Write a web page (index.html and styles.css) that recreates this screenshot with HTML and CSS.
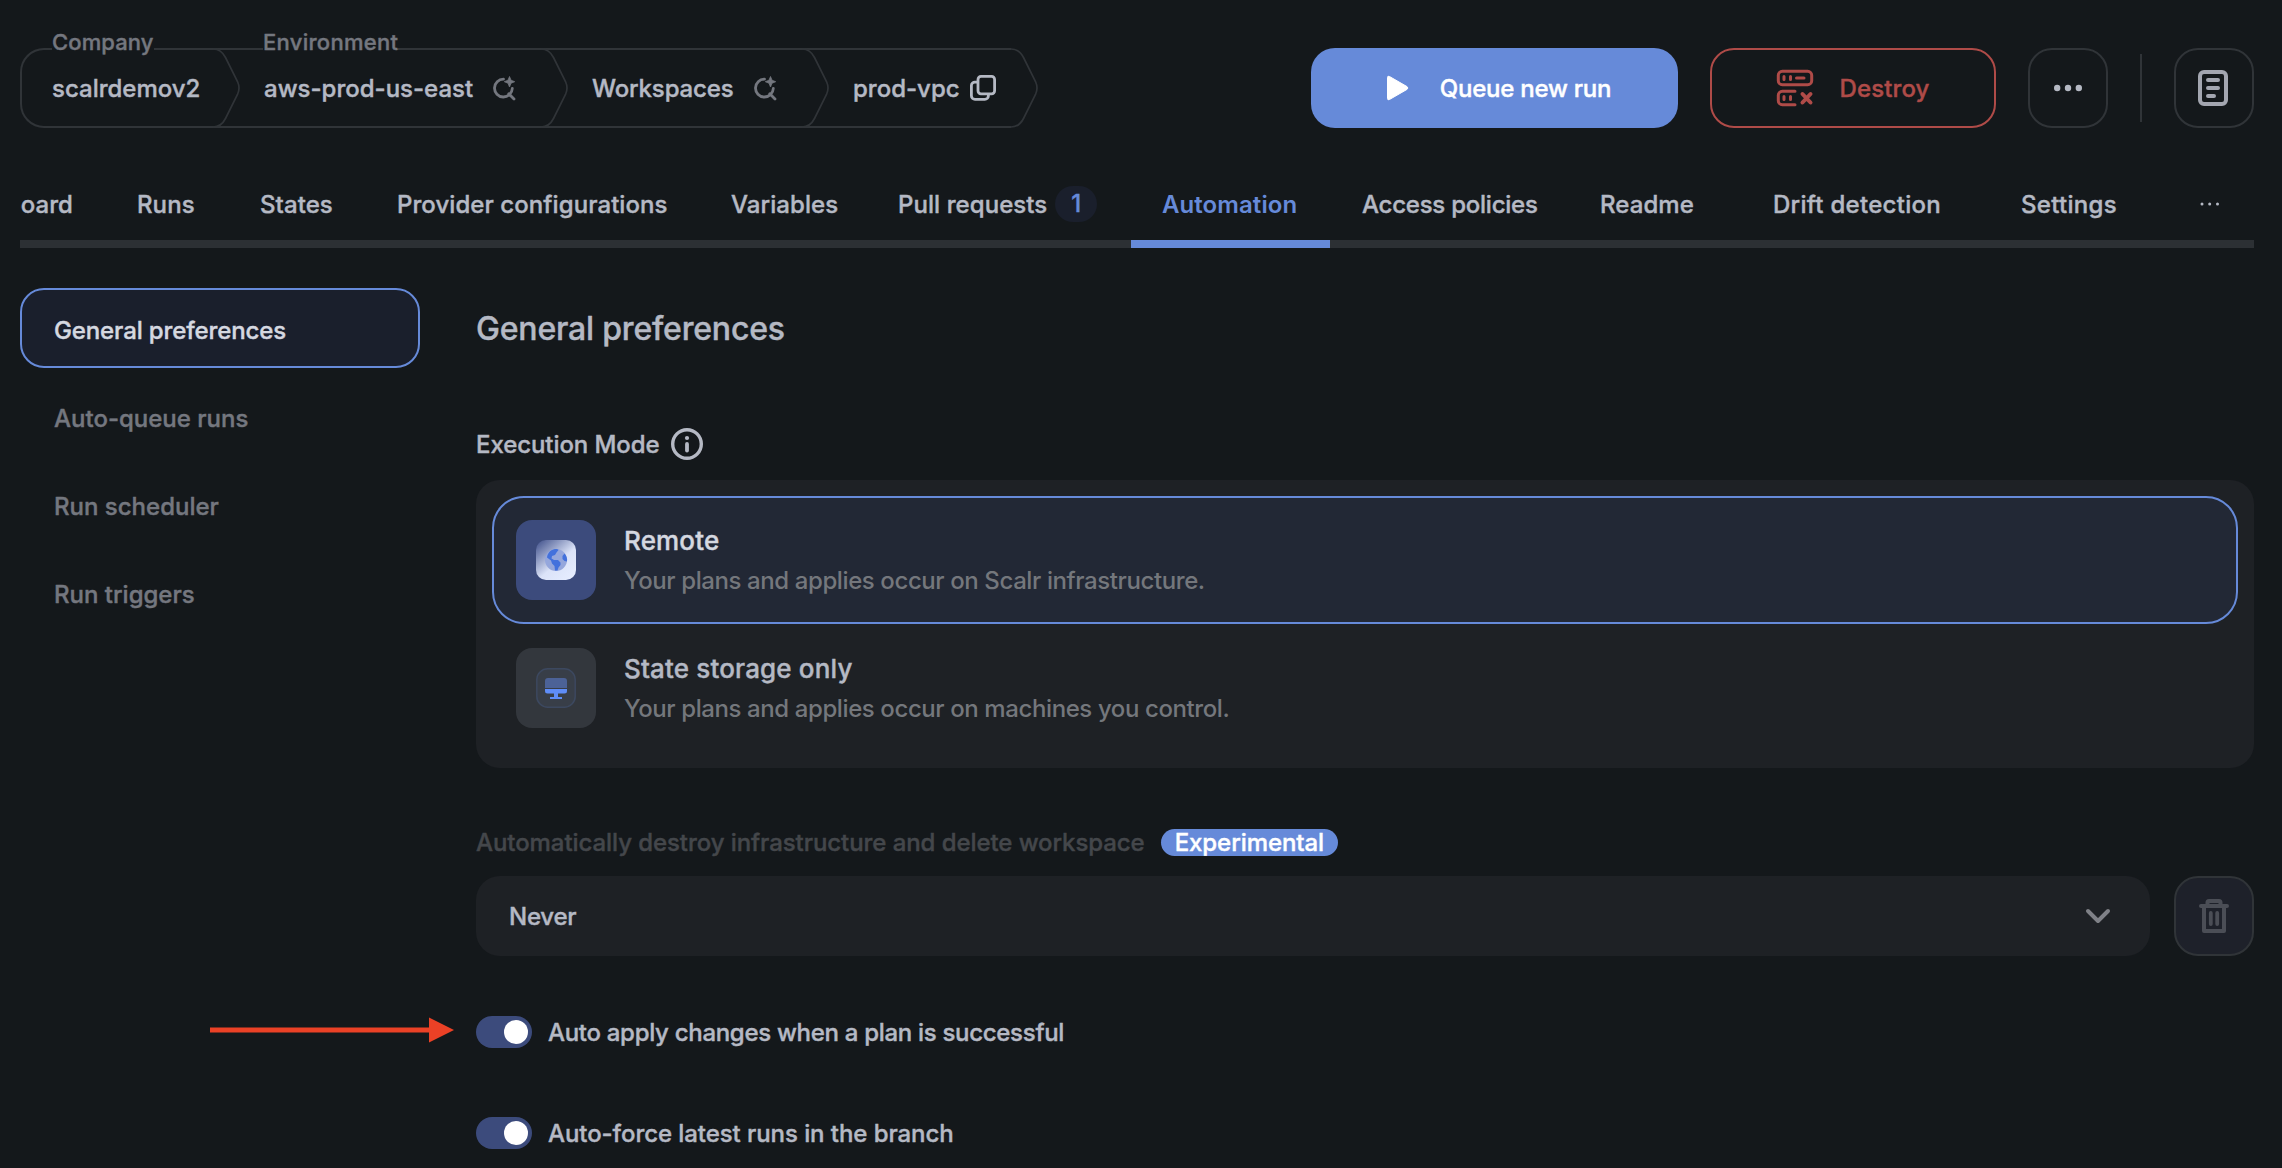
FILE: index.html
```html
<!DOCTYPE html>
<html lang="en">
<head>
    <meta charset="UTF-8">
    <meta name="viewport" content="width=device-width, initial-scale=1.0">
    <title>prod-vpc - Automation</title>
    <link rel="stylesheet" href="styles.css">
</head>
<body>
    <svg class="symbols" width="0" height="0">
        <symbol id="chevron" viewBox="0 0 27 80">
            <path d="M0 1C6 1 9.500 3.500 12.500 9.500L24.500 33.500Q27.500 40 24.500 46.500L12.500 70.500C9.500 76.500 6 79 0 79" fill="none" stroke="currentColor" stroke-width="1.700"/>
        </symbol>
        <symbol id="search" viewBox="0 0 24 25">
            <path d="M11.500 3.200A8.900 8.900 0 1 0 20.300 12.500M16.800 17.800L22 23" fill="none" stroke="currentColor" stroke-width="2.800" stroke-linecap="round"/>
            <path d="M17.500 0.500L19 4.200L22.700 5.700L19 7.200L17.500 11L16 7.200L12.300 5.700L16 4.200Z" fill="currentColor" stroke="currentColor" stroke-width="0.800"/>
        </symbol>
    </svg>

    <header class="topbar">
        <nav class="breadcrumb">
            <div class="crumb crumb-company">
                <span class="crumb-label">Company</span>
                <span>scalrdemov2</span>
            </div>
            <div class="crumb crumb-env">
                <svg class="chevron"><use href="#chevron"/></svg>
                <span class="crumb-label">Environment</span>
                <span>aws-prod-us-east</span>
                <svg class="search"><use href="#search"/></svg>
            </div>
            <div class="crumb crumb-list">
                <svg class="chevron"><use href="#chevron"/></svg>
                <span>Workspaces</span>
                <svg class="search"><use href="#search"/></svg>
            </div>
            <div class="crumb crumb-workspace">
                <svg class="chevron"><use href="#chevron"/></svg>
                <span>prod-vpc</span>
                <svg class="copy" viewBox="0 0 26 26" fill="none" stroke="currentColor" stroke-width="2.800">
                    <rect x="8" y="1.400" width="16.600" height="17.400" rx="3"/>
                    <path d="M7 7.200H5.200A3.400 3.400 0 0 0 1.400 10.600V20.800A3.600 3.600 0 0 0 5 24.400H14.800A3.600 3.600 0 0 0 18.400 20.800V19"/>
                </svg>
            </div>
            <svg class="chevron chevron-end"><use href="#chevron"/></svg>
        </nav>
        <div class="actions">
            <button class="btn btn-primary">
                <svg width="23" height="26" viewBox="0 0 23 26"><path d="M1.500 2.500Q1.500 0.500 3.500 1.500L21 11.600Q22.800 13 21 14.400L3.500 24.500Q1.500 25.500 1.500 23.500Z" fill="currentColor" stroke="currentColor"/></svg>
                Queue new run
            </button>
            <button class="btn btn-danger">
                <svg width="38" height="38" viewBox="0 0 38 38" fill="none" stroke="currentColor" stroke-width="3" stroke-linecap="round">
                    <rect x="2.300" y="2.300" width="33.400" height="13.400" rx="4"/>
                    <path d="M8 7.500V10.500M14.500 7.500V10.500M20.500 9H28"/>
                    <path d="M19 22.300H6.300A4 4 0 0 0 2.300 26.300V31.700A4 4 0 0 0 6.300 35.700H19M8 27.500V30.500M14.500 27.500V30.500"/>
                    <path d="M26.500 25L34.500 33.500M34.500 25L26.500 33.500" stroke-width="4"/>
                </svg>
                Destroy
            </button>
            <button class="btn btn-icon">
                <svg width="28" height="8" viewBox="0 0 28 8" fill="currentColor"><circle cx="3.200" cy="4" r="3.200"/><circle cx="14" cy="4" r="3.200"/><circle cx="24.800" cy="4" r="3.200"/></svg>
            </button>
            <span class="divider"></span>
            <button class="btn btn-icon btn-notes">
                <svg width="30" height="36" viewBox="0 0 30 36" fill="none" stroke="#a3a6b0" stroke-width="4" stroke-linecap="round"><rect x="2" y="2" width="26" height="32" rx="4"/><path d="M10 10H20M10 18H20M10 26H16"/></svg>
            </button>
        </div>
    </header>

    <nav class="tabs">
        <a class="tab tab-cut">Dashboard</a>
        <a class="tab">Runs</a>
        <a class="tab">States</a>
        <a class="tab">Provider configurations</a>
        <a class="tab">Variables</a>
        <a class="tab">Pull requests <span class="count">1</span></a>
        <a class="tab active">Automation</a>
        <a class="tab tab-policies">Access policies</a>
        <a class="tab">Readme</a>
        <a class="tab tab-wide">Drift detection</a>
        <a class="tab tab-wide">Settings</a>
        <a class="tab tab-more"><svg width="20" height="4" viewBox="0 0 20 4" fill="currentColor"><circle cx="2" cy="2" r="1.500"/><circle cx="9.700" cy="2" r="1.500"/><circle cx="17.500" cy="2" r="1.500"/></svg></a>
    </nav>

    <div class="layout">
        <aside class="sidebar">
            <a class="side-item active">General preferences</a>
            <a class="side-item">Auto-queue runs</a>
            <a class="side-item">Run scheduler</a>
            <a class="side-item">Run triggers</a>
        </aside>
        <main class="content">
            <h1>General preferences</h1>

            <div class="field-label">
                Execution Mode
                <svg width="32" height="32" viewBox="0 0 32 32"><circle cx="16" cy="16" r="14.300" fill="none" stroke="currentColor" stroke-width="3.400"/><circle cx="16" cy="10" r="2.100" fill="currentColor"/><path d="M16 16V22.500" stroke="currentColor" stroke-width="3.800" stroke-linecap="round"/></svg>
            </div>
            <div class="modes">
                <div class="mode selected">
                    <div class="mode-icon">
                        <svg width="40" height="40" viewBox="0 0 40 40">
                            <defs>
                                <linearGradient id="globeBg" x1="0" y1="0" x2="0.850" y2="1">
                                    <stop offset="0.050" stop-color="#4a5a92"/>
                                    <stop offset="0.600" stop-color="#dbe3f8"/>
                                    <stop offset="1" stop-color="#e6edff"/>
                                </linearGradient>
                            </defs>
                            <rect width="40" height="40" rx="10" fill="url(#globeBg)"/>
                            <circle cx="20" cy="20" r="11" fill="#95a7dc"/>
                            <path d="M18 9.200C20 8.800 22 9 22.500 10L20.500 12.500L19 15L16 16L15.500 18.500L18 20H22L24.500 22.500V25L22.500 27.500L21.500 30.500H19L18.500 26L16 23.500L15 20.500L11 17.500C11.500 13 14.500 10 18 9.200Z" fill="#4371dc"/>
                            <path d="M28.500 13.500C30.500 15.500 31.500 18.500 31 21.500L28.500 21L26.500 19V16L28.500 13.500Z" fill="#4371dc"/>
                        </svg>
                    </div>
                    <div class="mode-text">
                        <h2>Remote</h2>
                        <p>Your plans and applies occur on Scalr infrastructure.</p>
                    </div>
                </div>
                <div class="mode">
                    <div class="mode-icon">
                        <svg width="40" height="40" viewBox="0 0 40 40">
                            <rect x="0.800" y="0.800" width="38.400" height="38.400" rx="11" fill="#383e48" stroke="#3c485f" stroke-width="1.500"/>
                            <path d="M9 20V13Q9 10 12 10H28Q31 10 31 13V20Z" fill="#4c6297"/>
                            <path d="M9 21H31V23Q31 25.500 28.500 25.500H22V29H26V31H14V29H18V25.500H11.500Q9 25.500 9 23Z" fill="#5f8df8"/>
                        </svg>
                    </div>
                    <div class="mode-text">
                        <h2>State storage only</h2>
                        <p>Your plans and applies occur on machines you control.</p>
                    </div>
                </div>
            </div>

            <div class="field-label disabled">
                Automatically destroy infrastructure and delete workspace
                <span class="pill">Experimental</span>
            </div>
            <div class="destroy-row">
                <div class="select">
                    Never
                    <svg width="26" height="16" viewBox="0 0 26 16"><path d="M3 3L13 13L23 3" fill="none" stroke="#7f8187" stroke-width="4" stroke-linecap="round" stroke-linejoin="round"/></svg>
                </div>
                <button class="btn btn-icon btn-trash">
                    <svg width="30" height="34" viewBox="0 0 30 34" fill="none" stroke="currentColor" stroke-width="4" stroke-linecap="round" stroke-linejoin="round"><path d="M2 7H28M5 8V32H25V8"/><path d="M8.500 5V3.500Q8.500 2 10 2H20Q21.500 2 21.500 3.500V5"/><path d="M11.800 14V25M18.200 14V25" stroke-width="3.800"/></svg>
                </button>
            </div>

            <label class="toggle"><span class="switch"></span>Auto apply changes when a plan is successful</label>
            <label class="toggle toggle-force"><span class="switch"></span>Auto-force latest runs in the branch</label>
        </main>
    </div>

    <!-- arrow pointing at the auto apply switch -->
    <svg class="arrow" width="245" height="26" viewBox="0 0 245 26"><path d="M0 10.500H219V0.500L244 13L219 25.500V15.500H0Z" fill="#eb4126"/></svg>
</body>
</html>
```
FILE: styles.css
```css
* {
    box-sizing: border-box;
}
body {
    margin: 0;
    padding: 48px 28px 0 20px;
    background: #14181b;
    color: #b5b9c4;
    font-family: Inter, sans-serif;
    font-size: 24px;
    font-weight: 500;
    -webkit-text-stroke: 0.4px;
    overflow: hidden;
}
svg {
    display: block;
    flex: none;
}
h1, h2, p {
    margin: 0;
    font-weight: inherit;
}
.symbols {
    position: absolute;
}

/* top bar */
.topbar {
    display: flex;
    justify-content: space-between;
    height: 80px;
}
.breadcrumb {
    display: flex;
}
.crumb {
    position: relative;
    display: flex;
    align-items: center;
    height: 80px;
    border: solid #303438;
    border-width: 2px 0;
    white-space: nowrap;
}
.crumb-company {
    width: 193px;
    padding-left: 30px;
    border-left-width: 2px;
    border-radius: 24px 0 0 24px;
}
.crumb-env {
    width: 328px;
}
.crumb-list {
    width: 261px;
    letter-spacing: -0.006em;
}
.crumb-workspace {
    width: 209px;
}
.crumb-label {
    position: absolute;
    top: -19px;
    left: 30px;
    background: #14181b;
    color: #74777f;
    font-size: 22px;
    line-height: 22px;
    letter-spacing: 0.005em;
}
.crumb-env .crumb-label {
    left: 50px;
    letter-spacing: 0.013em;
}
.chevron {
    width: 27px;
    height: 80px;
    margin: -2px 24px -2px 0;
    color: #303438;
}
.chevron-end {
    margin: 0;
}
.search {
    width: 24px;
    height: 25px;
    margin-left: 19px;
    color: #74777f;
}
.copy {
    width: 26px;
    height: 26px;
    margin-left: 10px;
}
.actions {
    display: flex;
    gap: 32px;
    align-items: center;
}
.btn {
    display: flex;
    align-items: center;
    justify-content: center;
    height: 80px;
    padding: 0;
    border: 2px solid #303438;
    border-radius: 24px;
    background: none;
    color: #b5b9c4;
    font: inherit;
}
.btn-primary {
    width: 367px;
    gap: 31px;
    padding-left: 8px;
    border: 0;
    background: #668ad9;
    color: #fff;
    letter-spacing: -0.01em;
}
.btn-danger {
    width: 286px;
    gap: 25px;
    border-color: #af4b48;
    color: #af4b48;
    letter-spacing: 0.005em;
}
.btn-icon {
    width: 80px;
}
.btn-notes {
    padding-right: 2px;
}
.divider {
    width: 2px;
    height: 68px;
    background: #303438;
}

/* tabs */
.tabs {
    display: grid;
    grid-template-columns: 85px 123px 137px 334px 167px 265px 199px 238px 173px 248px 1fr 54px;
    height: 80px;
    margin-top: 40px;
    border-bottom: 8px solid #2c3034;
}
.tab {
    display: flex;
    align-items: center;
    height: 80px;
    padding: 0 0 8px 32px;
    letter-spacing: 0.003em;
    white-space: nowrap;
}
.tab-cut {
    justify-content: flex-end;
    padding: 0 32px 8px 0;
    overflow: hidden;
}
.tab-policies {
    letter-spacing: -0.01em;
}
.tab-wide {
    letter-spacing: 0.012em;
}
.tab-more {
    padding-left: 0;
}
.tab.active {
    border-bottom: 8px solid #668ad9;
    padding-bottom: 0;
    padding-left: 31px;
    color: #668ad9;
    font-weight: 600;
    -webkit-text-stroke: 0;
}
.count {
    width: 42px;
    margin-left: 8px;
    border-radius: 18px;
    background: #1a1f2c;
    color: #668ad9;
    line-height: 36px;
    text-align: center;
}

/* page body */
.layout {
    display: grid;
    grid-template-columns: 400px 1fr;
    gap: 56px;
    margin-top: 40px;
}
.sidebar {
    display: flex;
    flex-direction: column;
    gap: 8px;
}
.side-item {
    height: 80px;
    padding: 2px 0 0 32px;
    border: 2px solid transparent;
    border-radius: 24px;
    color: #74777f;
    line-height: 77px;
}
.side-item.active {
    border-color: #668ad9;
    background: #1a1f2c;
    color: #d5d8e0;
    letter-spacing: -0.005em;
}
h1 {
    height: 80px;
    font-size: 32px;
    line-height: 82px;
    letter-spacing: -0.006em;
}
.field-label {
    display: flex;
    align-items: center;
    gap: 11px;
    height: 32px;
    margin-top: 60px;
    letter-spacing: -0.003em;
}
.modes {
    margin-top: 20px;
    padding: 16px;
    border-radius: 24px;
    background: #1e2125;
}
.mode {
    display: flex;
    align-items: center;
    gap: 28px;
    height: 128px;
    padding: 0 22px;
    border: 2px solid transparent;
    border-radius: 32px;
}
.mode.selected {
    border-color: #668ad9;
    background: #222835;
}
.mode-icon {
    display: flex;
    align-items: center;
    justify-content: center;
    width: 80px;
    height: 80px;
    border-radius: 16px;
    background: #33373d;
}
.selected .mode-icon {
    background: #3c4b7c;
}
.mode-text {
    padding-top: 2px;
}
.mode h2 {
    font-size: 26px;
    line-height: 40px;
    letter-spacing: 0.006em;
}
.selected h2 {
    color: #d5d8e0;
}
.mode p {
    color: #74777c;
    line-height: 40px;
    letter-spacing: -0.0168em;
    -webkit-text-stroke: 0;
}
.field-label.disabled {
    gap: 16px;
    height: 28px;
    color: #44474b;
}
.pill {
    padding: 0 14px;
    border-radius: 14px;
    background: #668ad9;
    color: #fff;
    line-height: 27px;
}
.destroy-row {
    display: flex;
    gap: 24px;
    margin-top: 20px;
}
.select {
    flex: 1;
    display: flex;
    align-items: center;
    justify-content: space-between;
    height: 80px;
    padding: 0 39px 0 33px;
    border-radius: 24px;
    background: #1e2125;
    letter-spacing: -0.01em;
}
.btn-trash {
    background: #1e212a;
    color: #4b4e56;
}
.toggle {
    display: flex;
    align-items: center;
    gap: 16px;
    height: 32px;
    margin-top: 60px;
    letter-spacing: -0.0125em;
}
.toggle-force {
    margin-top: 69px;
    letter-spacing: -0.003em;
}
.switch {
    display: flex;
    justify-content: flex-end;
    width: 56px;
    padding: 4px;
    border-radius: 16px;
    background: #3c4b7c;
}
.switch::after {
    content: "";
    width: 24px;
    height: 24px;
    border-radius: 50%;
    background: #fff;
}
.arrow {
    position: absolute;
    left: 210px;
    top: 1017px;
}
```
